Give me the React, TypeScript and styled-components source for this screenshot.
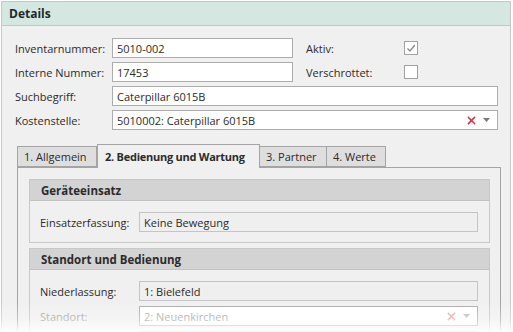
import React from "react";
import styled, { createGlobalStyle } from "styled-components";

const Global = createGlobalStyle`
  html, body { margin: 0; padding: 0; background: #ffffff; }
  body { font-family: "Open Sans", "Noto Sans", sans-serif; font-size: 11px; color: #2b2b2b; }
  * { box-sizing: border-box; }
`;

const Stage = styled.div`
  position: relative;
  width: 513px;
  height: 332px;
  overflow: hidden;
  padding: 1px 2px 0 1px;
`;

const Panel = styled.div`
  border: 1px solid #c6c6c6;
  border-bottom: none;
  background: #f0f0f0;
  height: 340px;
`;

const Header = styled.div`
  height: 24px;
  background: #d4e8e1;
  border-bottom: 1px solid #b8ccc5;
  padding-left: 7px;
  display: flex;
  align-items: center;
  font-weight: 700;
  font-size: 12px;
  color: #1f2a2a;
`;

const Body = styled.div`
  padding: 12px 12px 0 13px;
  display: flex;
  flex-direction: column;
`;

const Rows = styled.div`
  display: flex;
  flex-direction: column;
  gap: 4px;
`;

const Row = styled.div`
  display: flex;
  align-items: center;
  height: 20px;
`;

const Label = styled.div<{ $w: number; $disabled?: boolean }>`
  width: ${(p) => p.$w}px;
  flex: none;
  color: ${(p) => (p.$disabled ? "#a0a0a0" : "#2b2b2b")};
  white-space: nowrap;
`;

const Field = styled.div<{ $w?: number; $ro?: boolean; $disabled?: boolean }>`
  ${(p) => (p.$w ? `width: ${p.$w}px; flex: none;` : "flex: 1;")}
  height: 20px;
  border: 1px solid ${(p) => (p.$ro ? "#c4c4c4" : "#acacac")};
  background: ${(p) => (p.$ro ? "#efefef" : "#ffffff")};
  color: ${(p) => (p.$disabled ? "#a0a0a0" : "#2b2b2b")};
  display: flex;
  align-items: center;
  padding: 0 4px 0 4px;
  white-space: nowrap;
`;

const FieldText = styled.span`
  flex: 1;
`;

const Clear = styled.span<{ $faded?: boolean }>`
  width: 16px;
  display: flex;
  justify-content: center;
  opacity: ${(p) => (p.$faded ? 0.45 : 1)};
`;

const Arrow = styled.span<{ $faded?: boolean }>`
  width: 14px;
  display: flex;
  justify-content: center;
  opacity: ${(p) => (p.$faded ? 0.5 : 1)};
`;

const SideLabel = styled(Label)`
  margin-left: 13px;
`;

const Check = styled.div`
  width: 14px;
  height: 14px;
  border: 1px solid #a2a2a2;
  background: #ffffff;
  display: flex;
  align-items: center;
  justify-content: center;
`;

const TabStrip = styled.div`
  display: flex;
  align-items: flex-end;
  margin-top: 14px;
  padding-left: 2px;
  height: 23px;
  position: relative;
  z-index: 1;
`;

const Tab = styled.div<{ $active?: boolean; $w: number }>`
  width: ${(p) => p.$w}px;
  height: ${(p) => (p.$active ? 24 : 21)}px;
  margin-bottom: ${(p) => (p.$active ? -1 : 0)}px;
  border: 1px solid #a4a4a4;
  border-bottom: ${(p) => (p.$active ? "none" : "1px solid #a4a4a4")};
  margin-left: ${(p) => (p.$active ? 0 : -1)}px;
  background: ${(p) => (p.$active ? "#f0f0f0" : "#dedede")};
  font-weight: ${(p) => (p.$active ? 700 : 400)};
  letter-spacing: ${(p) => (p.$active ? "-0.25px" : "0")};
  padding-left: ${(p) => (p.$active ? 7 : 6)}px;
  display: flex;
  align-items: center;
  white-space: nowrap;
  &:first-child { margin-left: 0; }
`;

const TabBody = styled.div`
  border: 1px solid #a4a4a4;
  border-bottom: none;
  width: 484px;
  margin-left: 2px;
  padding: 11px 10px 0 11px;
  display: flex;
  flex-direction: column;
  gap: 5px;
  height: 200px;
`;

const Group = styled.div`
  border: 1px solid #c8c8c8;
`;

const GroupHead = styled.div`
  height: 21px;
  background: #d3d3d3;
  border-bottom: 1px solid #c2c2c2;
  padding-left: 11px;
  display: flex;
  align-items: center;
  font-weight: 700;
  font-size: 11.5px;
  color: #2b2b2b;
`;

const GroupBody = styled.div`
  padding: 11px 11px 10px 10px;
  display: flex;
  flex-direction: column;
  gap: 5px;
`;

const Fade = styled.div`
  position: absolute;
  left: 0;
  right: 0;
  bottom: 0;
  height: 30px;
  background: linear-gradient(to bottom, rgba(255,255,255,0) 0%, rgba(255,255,255,0.3) 55%, rgba(255,255,255,0.9) 100%);
  pointer-events: none;
`;

const XIcon = () => (
  <svg width="9" height="9" viewBox="0 0 9 9">
    <path d="M1.5 1.5 L7.5 7.5 M7.5 1.5 L1.5 7.5" stroke="#d8344a" strokeWidth="1.6" strokeLinecap="square" />
  </svg>
);

const DownIcon = () => (
  <svg width="7" height="4" viewBox="0 0 7 4">
    <path d="M0 0 H7 L3.5 4 Z" fill="#7a7a7a" />
  </svg>
);

const CheckMark = () => (
  <svg width="10" height="10" viewBox="0 0 10 10">
    <path d="M1.5 5.5 L4 8 L8.8 2" stroke="#8a8a8a" strokeWidth="1.3" fill="none" />
  </svg>
);

export default function App() {
  return (
    <>
      <Global />
      <Stage>
        <Panel>
          <Header>Details</Header>
          <Body>
            <Rows>
              <Row>
                <Label $w={97}>Inventarnummer:</Label>
                <Field $w={181}>5010-002</Field>
                <SideLabel $w={98}>Aktiv:</SideLabel>
                <Check>
                  <CheckMark />
                </Check>
              </Row>
              <Row>
                <Label $w={97}>Interne Nummer:</Label>
                <Field $w={181}>17453</Field>
                <SideLabel $w={98}>Verschrottet:</SideLabel>
                <Check />
              </Row>
              <Row>
                <Label $w={97}>Suchbegriff:</Label>
                <Field>Caterpillar 6015B</Field>
              </Row>
              <Row>
                <Label $w={97}>Kostenstelle:</Label>
                <Field>
                  <FieldText>5010002: Caterpillar 6015B</FieldText>
                  <Clear>
                    <XIcon />
                  </Clear>
                  <Arrow>
                    <DownIcon />
                  </Arrow>
                </Field>
              </Row>
            </Rows>
            <TabStrip>
              <Tab $w={80}>1. Allgemein</Tab>
              <Tab $w={163} $active>2. Bedienung und Wartung</Tab>
              <Tab $w={68}>3. Partner</Tab>
              <Tab $w={60}>4. Werte</Tab>
            </TabStrip>
            <TabBody>
              <Group>
                <GroupHead>Geräteeinsatz</GroupHead>
                <GroupBody>
                  <Row>
                    <Label $w={99}>Einsatzerfassung:</Label>
                    <Field $ro>Keine Bewegung</Field>
                  </Row>
                </GroupBody>
              </Group>
              <Group>
                <GroupHead>Standort und Bedienung</GroupHead>
                <GroupBody>
                  <Row>
                    <Label $w={99}>Niederlassung:</Label>
                    <Field $ro>1: Bielefeld</Field>
                  </Row>
                  <Row>
                    <Label $w={99} $disabled>Standort:</Label>
                    <Field $disabled>
                      <FieldText>2: Neuenkirchen</FieldText>
                      <Clear $faded>
                        <XIcon />
                      </Clear>
                      <Arrow $faded>
                        <DownIcon />
                      </Arrow>
                    </Field>
                  </Row>
                  <Row>
                    <Label $w={99} />
                    <Field />
                  </Row>
                </GroupBody>
              </Group>
            </TabBody>
          </Body>
        </Panel>
        <Fade />
      </Stage>
    </>
  );
}
